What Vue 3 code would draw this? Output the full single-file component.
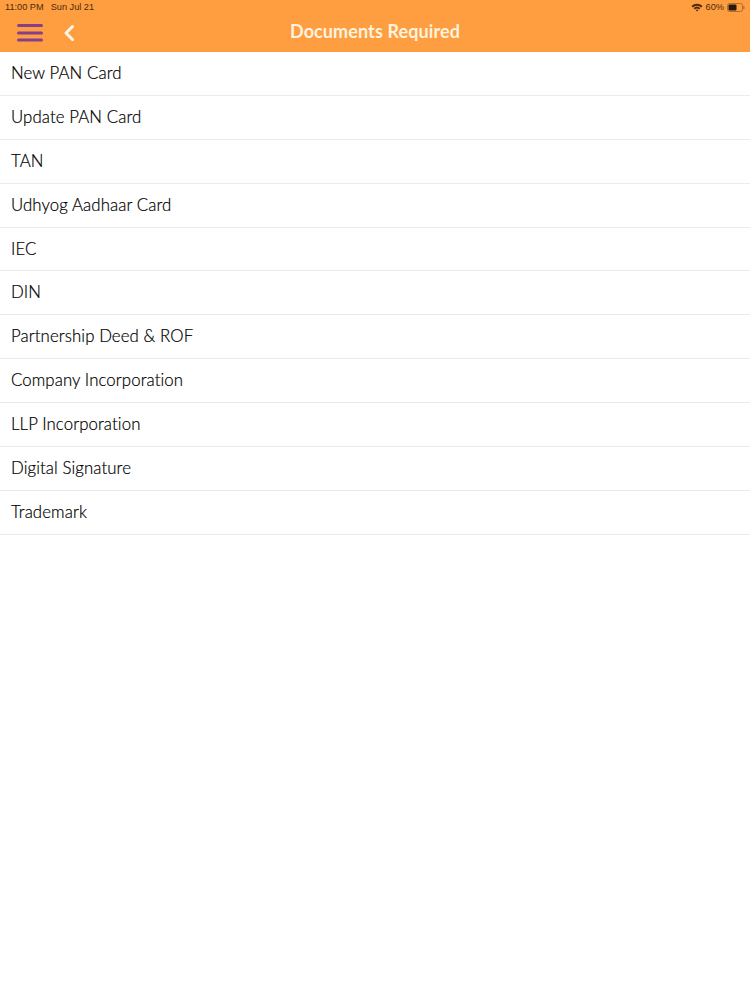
<script setup>
const items = ['New PAN Card','Update PAN Card','TAN','Udhyog Aadhaar Card','IEC','DIN','Partnership Deed & ROF','Company Incorporation','LLP Incorporation','Digital Signature','Trademark']
</script>

<template>
  <div class="page">
    <header class="header">
      <div class="status">
        <div class="status-left"><span>11:00 PM</span><span>Sun Jul 21</span></div>
        <div class="status-right">
          <svg class="wifi" width="12" height="9" viewBox="0 0 12 9"><path d="M0.5 3 A8 8 0 0 1 11.5 3 L10.2 4.4 A6 6 0 0 0 1.8 4.4 Z" fill="#4a2a10"/><path d="M2.6 5.1 A5 5 0 0 1 9.4 5.1 L8.1 6.4 A3.2 3.2 0 0 0 3.9 6.4 Z" fill="#4a2a10"/><path d="M4.7 7.1 A2 2 0 0 1 7.3 7.1 L6 8.6 Z" fill="#4a2a10"/></svg>
          <span>60%</span>
          <svg class="battery" width="18" height="9" viewBox="0 0 18 9"><rect x="0.5" y="0.5" width="15" height="8" rx="2" fill="none" stroke="#a87038"/><rect x="1.5" y="1.5" width="8" height="6" rx="1" fill="#2c1808"/><rect x="16.2" y="3" width="1.3" height="3" rx="0.6" fill="#a87038"/></svg>
        </div>
      </div>
      <div class="nav">
        <svg class="menu" width="28" height="20" viewBox="0 0 28 20"><g stroke="#84408c" stroke-width="3" stroke-linecap="round"><path d="M2.5 2.5H25.5"/><path d="M2.5 10H25.5"/><path d="M2.5 17H25.5"/></g></svg>
        <svg class="back" width="14" height="18" viewBox="0 0 14 18"><path d="M10.5 2.5L4 9l6.5 6.5" fill="none" stroke="#fff6e6" stroke-width="3" stroke-linecap="round" stroke-linejoin="round"/></svg>
        <div class="title">Documents Required</div>
      </div>
    </header>
    <ul class="list">
      <li v-for="item in items" :key="item" class="row">{{ item }}</li>
    </ul>
  </div>
</template>

<style scoped>
.page { width: 750px; height: 1000px; background: #fff; font-family: "Lato", "Noto Sans", sans-serif; overflow: hidden; }
.header { height: 52px; background: #ff9e40; box-sizing: border-box; }
.status { height: 14px; padding: 0 5px 0 5px; display: flex; justify-content: space-between; align-items: center; font-family: "Liberation Sans", sans-serif; font-size: 9.2px; color: #4a2a10; box-sizing: border-box; }
.status-left { display: flex; gap: 7px; }
.status-right { display: flex; align-items: center; gap: 3px; }
.nav { position: relative; height: 38px; display: flex; align-items: center; padding-left: 16px; }
.back { margin-left: 18px; }
.title { position: absolute; left: 0; right: 0; top: 5px; text-align: center; color: #fff3df; font-size: 18px; font-weight: 700; line-height: 24px; letter-spacing: 0.1px; }
.list { margin: 0; padding: 0; list-style: none; }
.row { height: 43.9px; box-sizing: border-box; border-bottom: 1px solid #ebebeb; padding: 0 0 2px 11px; display: flex; align-items: center; font-size: 16.8px; font-weight: 300; color: #000; letter-spacing: 0.1px; -webkit-text-stroke: 0.2px #000; }
</style>
